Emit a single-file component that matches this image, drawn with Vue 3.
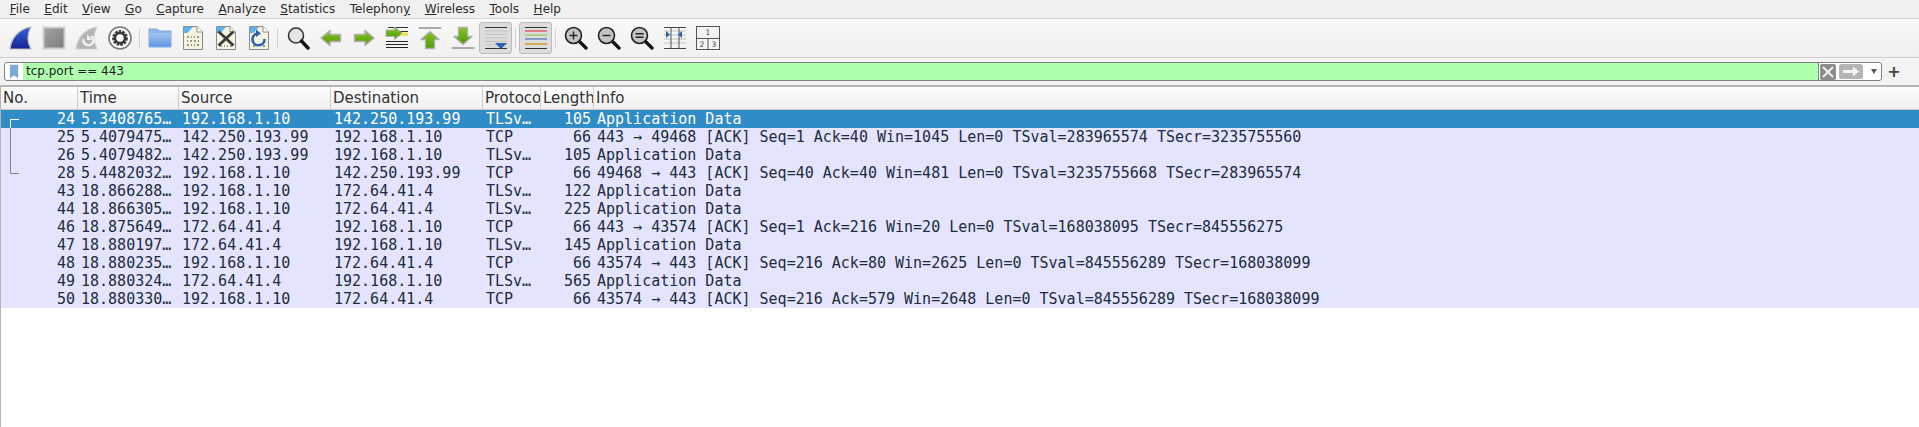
<script setup>
const menus = [
  ['F', 'ile'], ['E', 'dit'], ['V', 'iew'], ['G', 'o'], ['C', 'apture'], ['A', 'nalyze'],
  ['S', 'tatistics'], ['Telephon', 'y', ''], ['W', 'ireless'], ['T', 'ools'], ['H', 'elp'],
]

const columns = ['No.', 'Time', 'Source', 'Destination', 'Protocol', 'Length', 'Info']

const packets = [
  [24, '5.3408765…', '192.168.1.10', '142.250.193.99', 'TLSv…', 105, 'Application Data'],
  [25, '5.4079475…', '142.250.193.99', '192.168.1.10', 'TCP', 66, '443 → 49468 [ACK] Seq=1 Ack=40 Win=1045 Len=0 TSval=283965574 TSecr=3235755560'],
  [26, '5.4079482…', '142.250.193.99', '192.168.1.10', 'TLSv…', 105, 'Application Data'],
  [28, '5.4482032…', '192.168.1.10', '142.250.193.99', 'TCP', 66, '49468 → 443 [ACK] Seq=40 Ack=40 Win=481 Len=0 TSval=3235755668 TSecr=283965574'],
  [43, '18.866288…', '192.168.1.10', '172.64.41.4', 'TLSv…', 122, 'Application Data'],
  [44, '18.866305…', '192.168.1.10', '172.64.41.4', 'TLSv…', 225, 'Application Data'],
  [46, '18.875649…', '172.64.41.4', '192.168.1.10', 'TCP', 66, '443 → 43574 [ACK] Seq=1 Ack=216 Win=20 Len=0 TSval=168038095 TSecr=845556275'],
  [47, '18.880197…', '172.64.41.4', '192.168.1.10', 'TLSv…', 145, 'Application Data'],
  [48, '18.880235…', '192.168.1.10', '172.64.41.4', 'TCP', 66, '43574 → 443 [ACK] Seq=216 Ack=80 Win=2625 Len=0 TSval=845556289 TSecr=168038099'],
  [49, '18.880324…', '172.64.41.4', '192.168.1.10', 'TLSv…', 565, 'Application Data'],
  [50, '18.880330…', '192.168.1.10', '172.64.41.4', 'TCP', 66, '43574 → 443 [ACK] Seq=216 Ack=579 Win=2648 Len=0 TSval=845556289 TSecr=168038099'],
]
</script>

<template>
  <div class="app">
    <nav class="menubar">
      <span v-for="m in menus" :key="m[0] + m[1]" class="menu">
        <template v-if="m.length === 3">{{ m[0] }}<u>{{ m[1] }}</u></template>
        <template v-else><u>{{ m[0] }}</u>{{ m[1] }}</template>
      </span>
    </nav>

    <div class="toolbar">
      <!-- shared gradients -->
      <svg width="0" height="0" class="defs">
        <defs>
          <linearGradient id="fin" x1="0" y1="0" x2="0" y2="1">
            <stop offset="0" stop-color="#3a62e0" />
            <stop offset="1" stop-color="#14238f" />
          </linearGradient>
          <linearGradient id="stopfill" x1="0" y1="0" x2="1" y2="1">
            <stop offset="0" stop-color="#a2a2a2" />
            <stop offset="1" stop-color="#7e7e7e" />
          </linearGradient>
          <linearGradient id="green" x1="0" y1="0" x2="0" y2="1">
            <stop offset="0" stop-color="#86c51e" />
            <stop offset="1" stop-color="#4f9a08" />
          </linearGradient>
          <linearGradient id="folder" x1="0" y1="0" x2="0" y2="1">
            <stop offset="0" stop-color="#a4c8f2" />
            <stop offset="1" stop-color="#5d97e2" />
          </linearGradient>
        </defs>
      </svg>
      <!-- start -->
      <span class="tool"><svg viewBox="0 0 24 24">
        <path d="M1 23C2 13 9 3 22 1C18 8 18 16 22 23Z" fill="url(#fin)" stroke="#bdbdbd" stroke-width="1.2" />
      </svg></span>
      <!-- stop -->
      <span class="tool"><svg viewBox="0 0 24 24">
        <rect x="1.500" y="1.500" width="21" height="21" fill="url(#stopfill)" stroke="#cfcfcf" stroke-width="2" />
      </svg></span>
      <!-- restart -->
      <span class="tool"><svg viewBox="0 0 24 24">
        <path d="M1 23C2 13 9 3 22 1C18 8 18 16 22 23Z" fill="#b4b4b4" stroke="#cfcfcf" stroke-width="1.2" />
        <path d="M16 10A5 5 0 1 1 8.500 13" fill="none" stroke="#f4f4f4" stroke-width="2.400" />
        <path d="M12 8L12 14L17 14Z" fill="#f4f4f4" />
      </svg></span>
      <!-- options -->
      <span class="tool"><svg viewBox="0 0 24 24">
        <circle cx="12" cy="12" r="11" fill="#fff" stroke="#777" stroke-width="1.600" />
        <circle cx="12" cy="12" r="6.200" fill="none" stroke="#3a3a3a" stroke-width="3.400" stroke-dasharray="2.400 1" />
        <circle cx="12" cy="12" r="5" fill="none" stroke="#3a3a3a" stroke-width="2.600" />
      </svg></span>
      <span class="sep"></span>
      <!-- open -->
      <span class="tool"><svg viewBox="0 0 24 24">
        <path d="M1 3H9L11 5H23V21H1Z" fill="#8ab6ec" stroke="#85a9d6" />
        <rect x="1.500" y="7" width="21" height="13.500" fill="url(#folder)" />
      </svg></span>
      <!-- file -->
      <span class="tool"><svg viewBox="0 0 24 24">
        <path d="M2.500 0.500H16L21.500 6V23.500H2.500Z" fill="#f6f3df" stroke="#8a8a8a" />
        <path d="M3 1H12L6.500 7H3Z" fill="#5cb2ec" />
        <path d="M16 0.500V6H21.500" fill="#fff" stroke="#8a8a8a" />
        <path d="M6 11H8M10 11H11M13 11H14M16 11H18M6 15H7M9 15H11M13 15H15M17 15H18M6 19H8M10 19H11M13 19H14M16 19H18" stroke="#97978a" stroke-width="2" />
      </svg></span>
      <!-- close -->
      <span class="tool"><svg viewBox="0 0 24 24">
        <path d="M2.500 0.500H16L21.500 6V23.500H2.500Z" fill="#f6f3df" stroke="#8a8a8a" />
        <path d="M3 1H12L6.500 7H3Z" fill="#5cb2ec" />
        <path d="M16 0.500V6H21.500" fill="#fff" stroke="#8a8a8a" />
        <path d="M6 20H8M10 20H11M13 20H14M16 20H18" stroke="#97978a" stroke-width="2" />
        <path d="M4.500 5.500L19.500 19.500M19.500 5.500L4.500 19.500" stroke="#3b3b3b" stroke-width="2.800" />
      </svg></span>
      <!-- reload -->
      <span class="tool"><svg viewBox="0 0 24 24">
        <path d="M2.500 0.500H16L21.500 6V23.500H2.500Z" fill="#f6f3df" stroke="#8a8a8a" />
        <path d="M3 1H12L6.500 7H3Z" fill="#5cb2ec" />
        <path d="M16 0.500V6H21.500" fill="#fff" stroke="#8a8a8a" />
        <path d="M6 20H8M16 20H18" stroke="#97978a" stroke-width="2" />
        <path d="M17.500 13A6 6 0 1 1 10 7.500" fill="none" stroke="#2b62ae" stroke-width="2.600" />
        <path d="M9 3.500L14 7.500L9 11Z" fill="#2b62ae" />
      </svg></span>
      <span class="sep short"></span>
      <!-- find -->
      <span class="tool"><svg viewBox="0 0 24 24">
        <circle cx="10" cy="9.500" r="7.500" fill="#e6e6e6" stroke="#333" stroke-width="1.600" />
        <path d="M15.500 15L22 22" stroke="#111" stroke-width="3.400" stroke-linecap="round" />
      </svg></span>
      <!-- back -->
      <span class="tool"><svg viewBox="0 0 24 24">
        <path d="M2 12L11 4.500V8.500H21.500V15.500H11V19.500Z" fill="url(#green)" stroke="#b0b0b0" stroke-width="1.500" stroke-linejoin="round" />
      </svg></span>
      <!-- forward -->
      <span class="tool"><svg viewBox="0 0 24 24">
        <path d="M22 12L13 4.500V8.500H2.500V15.500H13V19.500Z" fill="url(#green)" stroke="#b0b0b0" stroke-width="1.500" stroke-linejoin="round" />
      </svg></span>
      <!-- go to packet -->
      <span class="tool"><svg viewBox="0 0 24 24">
        <path d="M3 1.500H23M14 5.500H23M14 9.500H23" stroke="#333" stroke-width="1" />
        <rect x="15" y="6.500" width="8" height="3.500" fill="#f0e060" />
        <path d="M1 15.500H23M1 18.500H23M1 21.500H23" stroke="#222" stroke-width="1.200" />
        <path d="M17 7L9.500 0.800V4H1V10.500H9.500V13.500Z" fill="url(#green)" stroke="#b0b0b0" stroke-linejoin="round" />
      </svg></span>
      <!-- first -->
      <span class="tool"><svg viewBox="0 0 24 24">
        <path d="M1.500 2H22.500" stroke="#aaa" stroke-width="2" stroke-linecap="round" />
        <path d="M12 5.500L21 13.500H16.500V22.500H7.500V13.500H3Z" fill="url(#green)" stroke="#b0b0b0" stroke-width="1.300" stroke-linejoin="round" />
      </svg></span>
      <!-- last -->
      <span class="tool"><svg viewBox="0 0 24 24">
        <path d="M1.500 22H22.500" stroke="#aaa" stroke-width="2" stroke-linecap="round" />
        <path d="M12 18.500L21 10.500H16.500V1.500H7.500V10.500H3Z" fill="url(#green)" stroke="#b0b0b0" stroke-width="1.300" stroke-linejoin="round" />
      </svg></span>
      <!-- autoscroll -->
      <span class="tool toggled"><svg viewBox="0 0 24 24">
        <path d="M1 1.500H23M1 22.500H23" stroke="#333" stroke-width="1" />
        <path d="M1 5H23M1 8.500H23M1 12H23M1 15.500H23M1 19H23" stroke="#c3c3bd" stroke-width="1" />
        <path d="M11 17H23L17 23Z" fill="#2e62ac" />
      </svg></span>
      <span class="sep"></span>
      <!-- colorize -->
      <span class="tool toggled"><svg viewBox="0 0 24 24">
        <path d="M1 1.500H23M1 22.500H23" stroke="#333" stroke-width="1" />
        <path d="M1 5H23" stroke="#e02020" />
        <path d="M1 9H23" stroke="#7ac520" />
        <path d="M1 13H23" stroke="#2e62ac" />
        <path d="M1 18H23" stroke="#c8960c" stroke-width="1.400" />
      </svg></span>
      <span class="sep"></span>
      <!-- zoom in -->
      <span class="tool"><svg viewBox="0 0 24 24">
        <circle cx="9.500" cy="9.500" r="8" fill="#c4c4c4" stroke="#222" stroke-width="1.600" />
        <path d="M16 16L22 22" stroke="#111" stroke-width="3.200" stroke-linecap="round" />
        <path d="M5.500 9.500H13.500M9.500 5.500V13.500" stroke="#222" stroke-width="1.400" />
      </svg></span>
      <!-- zoom out -->
      <span class="tool"><svg viewBox="0 0 24 24">
        <circle cx="9.500" cy="9.500" r="8" fill="#c4c4c4" stroke="#222" stroke-width="1.600" />
        <path d="M16 16L22 22" stroke="#111" stroke-width="3.200" stroke-linecap="round" />
        <path d="M5.500 9.500H13.500" stroke="#222" stroke-width="1.400" />
      </svg></span>
      <!-- zoom normal -->
      <span class="tool"><svg viewBox="0 0 24 24">
        <circle cx="9.500" cy="9.500" r="8" fill="#c4c4c4" stroke="#222" stroke-width="1.600" />
        <path d="M16 16L22 22" stroke="#111" stroke-width="3.200" stroke-linecap="round" />
        <path d="M5.500 7.800H13.500M5.500 11.200H13.500" stroke="#222" stroke-width="1.400" />
      </svg></span>
      <!-- resize columns -->
      <span class="tool"><svg viewBox="0 0 24 24">
        <path d="M1 1.500H23M1 22.500H23" stroke="#444" stroke-width="1" />
        <path d="M1 5H23M1 9H23M1 13H23M1 17H23" stroke="#c3c3bd" stroke-width="1" />
        <path d="M8 1V23M16 1V23" stroke="#555" stroke-width="1" />
        <path d="M3 5L7 8.500L3 12ZM19 5L15 8.500L19 12Z" fill="#2e62ac" />
      </svg></span>
      <!-- layout -->
      <span class="tool"><svg viewBox="0 0 24 24">
        <rect x="0.500" y="0.500" width="23" height="23" fill="#f4f4f4" stroke="#555" />
        <path d="M0.500 12.500H23.500M12 12.500V23.500" stroke="#555" />
        <text x="12" y="9" class="pane-num">1</text>
        <text x="6" y="21" class="pane-num">2</text>
        <text x="18" y="21" class="pane-num">3</text>
      </svg></span>
    </div>

    <div class="filterbar">
      <div class="filter">
        <span class="bookmark"><svg viewBox="0 0 10 15" width="9" height="15">
          <path d="M0 0H9V15L4.500 12L0 15Z" fill="#7ea9dc" />
        </svg></span>
        <span class="expr">tcp.port == 443</span>
        <span class="clear"><svg viewBox="0 0 16 16" width="16" height="16">
          <rect width="16" height="16" rx="2" fill="#8d8d8d" />
          <path d="M3 3L13 13M13 3L3 13" stroke="#f4f4f4" stroke-width="1.800" />
        </svg></span>
        <span class="apply"><svg viewBox="0 0 24 15" width="24" height="15">
          <rect width="24" height="15" rx="2.500" fill="#b4b4b4" />
          <path d="M4 6H14V2.500L20 7.500L14 12.500V9H4Z" fill="#f4f4f4" />
        </svg></span>
        <span class="caret"></span>
      </div>
      <span class="plus">+</span>
    </div>

    <div class="list">
      <div class="row head">
        <span v-for="c in columns" :key="c" class="cell">{{ c }}</span>
      </div>
      <div class="body">
        <div v-for="(p, i) in packets" :key="p[0]" class="row packet" :class="{ selected: i === 0 }">
          <span v-for="(v, j) in p" :key="j" class="cell">{{ v }}</span>
        </div>
        <svg class="conversation" width="20" height="72" viewBox="0 0 20 72">
          <path d="M18 9.500H9.500V18" fill="none" stroke="#fff" />
          <path d="M9.500 18V63.500H18" fill="none" stroke="#7b8794" />
        </svg>
      </div>
    </div>
  </div>
</template>

<style>
html,
body {
  margin: 0;
  background: #fff;
}
</style>

<style scoped>
.app {
  width: 1919px;
  height: 427px;
  overflow: hidden;
  font-family: "DejaVu Sans", sans-serif;
  color: #2a2a2a;
  background: #fff;
}

.menubar {
  height: 18px;
  display: flex;
  align-items: center;
  padding-left: 2.500px;
  font-size: 12px;
  background: #f0f0f0;
  border-bottom: 1px solid #d8d8d8;
}

.menu {
  padding: 0 7.250px;
}

.defs {
  position: absolute;
}

.toolbar {
  height: 38px;
  display: flex;
  align-items: center;
  padding-left: 4px;
  background: linear-gradient(#f8f8f8, #f0f0f0);
  border-bottom: 1px solid #cfcfcf;
}

.tool {
  width: 33px;
  height: 32px;
  box-sizing: border-box;
  display: flex;
  align-items: center;
  justify-content: center;
  flex: none;
}

.tool svg {
  width: 24px;
  height: 24px;
}

.toggled {
  border: 1px solid #bcbcbc;
  border-radius: 3px;
  background: #dcdcdc;
}

.sep {
  width: 1px;
  height: 20px;
  margin: 0 3px;
  background: #d4d4d4;
  flex: none;
}

.sep.short {
  margin: 0 3px 0 2px;
}

.pane-num {
  font-size: 7.500px;
  text-anchor: middle;
  fill: #444;
}

.filterbar {
  height: 29px;
  box-sizing: border-box;
  display: flex;
  align-items: flex-start;
  padding: 4px 0 0 4px;
  background: #f3f3f3;
  border-bottom: 2px solid #b4b4b4;
}

.filter {
  width: 1876px;
  height: 17px;
  display: flex;
  align-items: center;
  background: #fff;
  border: 1px solid #808080;
  border-radius: 3px;
  overflow: hidden;
}

.bookmark {
  width: 18px;
  display: flex;
  justify-content: center;
}

.expr {
  width: 1792px;
  height: 100%;
  padding-left: 3px;
  font-size: 12px;
  line-height: 17px;
  color: #1d1d1d;
  background: #afffaf;
  border-right: 1px solid #808080;
}

.clear {
  display: flex;
  margin-left: 1px;
}

.apply {
  display: flex;
  margin-left: 3px;
}

.caret {
  width: 0;
  height: 0;
  margin-left: 8px;
  border: 3.500px solid transparent;
  border-top: 5px solid #555;
  border-bottom: 0;
}

.plus {
  width: 24px;
  text-align: center;
  font-size: 16px;
  line-height: 19px;
  font-weight: bold;
  color: #444;
}

.list {
  border-left: 1px solid #b4b4b4;
  height: 342px;
}

.row {
  display: grid;
  grid-template-columns: 77px 101px 152px 152px 58px 53px 1fr;
}

.head {
  height: 23px;
  box-sizing: border-box;
  background: linear-gradient(#fdfdfd, #efefef);
  border-bottom: 1px solid #c8c8c8;
  font-size: 15px;
  line-height: 23px;
  color: #333;
}

.head .cell {
  padding: 0 3px 0 2px;
  border-right: 1px solid #cdcdcd;
  white-space: nowrap;
  overflow: hidden;
}

.head .cell:last-child {
  border-right: 0;
}

.body {
  position: relative;
}

.packet {
  height: 18px;
  background: #e4e4ff;
  color: #1c2c3a;
  font-family: "DejaVu Sans Mono", monospace;
  font-size: 15px;
  line-height: 18px;
  white-space: pre;
}

.packet.selected {
  background: #308cc6;
  color: #fff;
}

.packet .cell {
  padding-left: 3px;
  overflow: hidden;
}

.packet .cell:nth-child(1),
.packet .cell:nth-child(6) {
  text-align: right;
  padding-left: 0;
  padding-right: 3px;
}

.conversation {
  position: absolute;
  top: 0;
  left: 0;
}
</style>
